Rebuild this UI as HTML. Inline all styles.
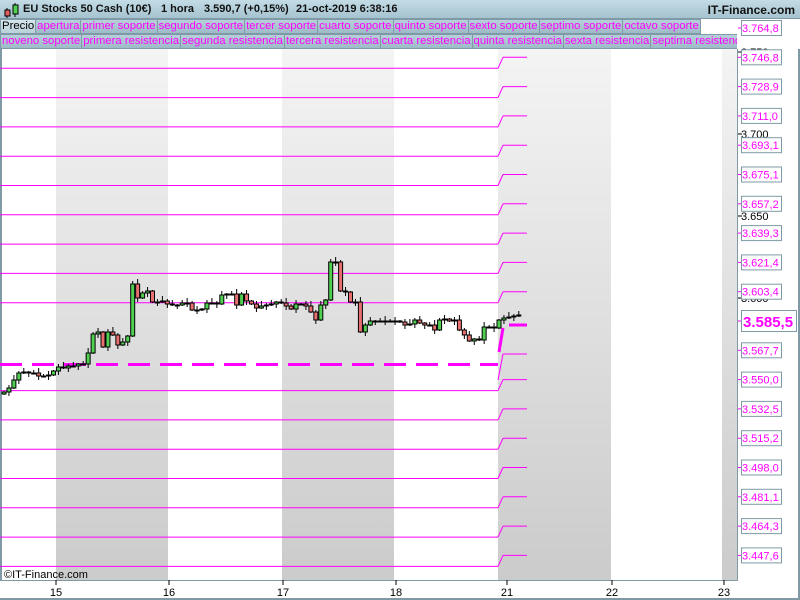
<!DOCTYPE html>
<html><head><meta charset="utf-8"><style>
*{margin:0;padding:0;box-sizing:border-box}
body{width:800px;height:600px;overflow:hidden;background:#fff;font-family:"Liberation Sans",sans-serif;position:relative}
#top{position:absolute;left:0;top:0;width:800px;height:19px;background:linear-gradient(#c3dce6,#a5c3cf);border-bottom:1px solid #7f9aa6;font-size:11px;font-weight:bold;color:#111}
#top span{position:absolute;top:3px}
.row{position:absolute;left:0;width:800px;height:15px;background:#fff;font-size:11.35px;white-space:nowrap;overflow:hidden}
.row span{display:inline-block;height:15px;line-height:13px;padding:0 1px;background:linear-gradient(#b7d0db,#9dbbc7);border:1px solid #7f9aa6;color:#f0f;margin-right:-1px}
</style></head><body>
<div id="top">
<svg width="20" height="19" style="position:absolute;left:2px;top:0"><line x1="5" y1="8" x2="5" y2="18" stroke="#000"/><rect x="3" y="10" width="5" height="6" fill="#e06060" stroke="#000"/><line x1="13" y1="3" x2="13" y2="17" stroke="#000"/><rect x="11" y="5" width="5" height="9" fill="#50d050" stroke="#000"/></svg>
<span style="left:23px">EU Stocks 50 Cash (10€)</span>
<span style="left:161px">1 hora</span>
<span style="left:204px">3.590,7 (+0,15%)</span>
<span style="left:296px">21-oct-2019 6:38:16</span>
<span style="right:5px;font-size:12px">IT-Finance.com</span>
</div>
<div class="row" style="top:19px"><span style="color:#000;background:linear-gradient(#d5e6ec,#b9d1da)">Precio</span><span>apertura</span><span>primer soporte</span><span>segundo soporte</span><span>tercer soporte</span><span>cuarto soporte</span><span>quinto soporte</span><span>sexto soporte</span><span>septimo soporte</span><span>octavo soporte</span></div>
<div class="row" style="top:34px;width:737px"><span>noveno soporte</span><span>primera resistencia</span><span>segunda resistencia</span><span>tercera resistencia</span><span>cuarta resistencia</span><span>quinta resistencia</span><span>sexta resistencia</span><span>septima resistencia</span></div>
<svg id="ch" width="800" height="600" style="position:absolute;left:0;top:0;z-index:-1" font-family="Liberation Sans" font-size="11">
<defs><linearGradient id="g" x1="0" y1="0" x2="0" y2="1"><stop offset="0" stop-color="#f4f4f4"/><stop offset="1" stop-color="#cbcbcb"/></linearGradient></defs>
<rect x="56" y="49" width="112" height="531" fill="url(#g)"/>
<rect x="282" y="49" width="112" height="531" fill="url(#g)"/>
<rect x="498" y="49" width="113" height="531" fill="url(#g)"/>
<rect x="722" y="49" width="15" height="531" fill="url(#g)"/>
<line x1="1" y1="49" x2="1" y2="580" stroke="#7f9aa6" stroke-width="2"/>
<line x1="737.5" y1="49" x2="737.5" y2="580" stroke="#7f9aa6"/>
<line x1="0" y1="580.5" x2="738" y2="580.5" stroke="#7f9aa6"/>
<rect x="0" y="598" width="800" height="2" fill="#7f9aa6"/>
<rect x="798" y="49" width="2" height="551" fill="#7f9aa6"/>
<g id="lv"></g><g id="cd"></g>
<text x="4" y="578" font-size="11">©IT-Finance.com</text>
</svg>
<svg width="800" height="600" style="position:absolute;left:0;top:0;z-index:2;pointer-events:none" font-family="Liberation Sans" font-size="11"><g id="ax"></g></svg>
<script>
var NS="http://www.w3.org/2000/svg";
function el(p,t,a,txt){var e=document.createElementNS(NS,t);for(var k in a)e.setAttribute(k,a[k]);if(txt)e.textContent=txt;document.getElementById(p).appendChild(e);return e;}
var vals=["3.764,8","3.746,8","3.728,9","3.711,0","3.693,1","3.675,1","3.657,2","3.639,3","3.621,4","3.603,4","3.585,5","3.567,7","3.550,0","3.532,5","3.515,2","3.498,0","3.481,1","3.464,3","3.447,6"];
[[52,"3.750"],[134,"3.700"],[216,"3.650"],[298,"3.600"]].forEach(function(a){el("ax","text",{x:741,y:a[0]+4},a[1]);el("ax","line",{x1:738,y1:a[0],x2:742,y2:a[0],stroke:"#000"});});
for(var k=0;k<19;k++){var yR=28+29.3*k,yL=39+29.3*k;
 if(k==10){el("lv","line",{x1:509,y1:325,x2:527,y2:325,stroke:"#f0f","stroke-width":3});el("lv","line",{x1:499,y1:352,x2:503,y2:328,stroke:"#f0f","stroke-width":3});}
 else if(k==11){el("lv","line",{x1:0,y1:364.5,x2:498,y2:364.5,stroke:"#f0f","stroke-width":3,"stroke-dasharray":"22,10"});el("lv","line",{x1:498,y1:380,x2:503,y2:354,stroke:"#f0f"});el("lv","line",{x1:503,y1:354,x2:527,y2:354,stroke:"#f0f"});}
 else{ if(yL>49&&yL<580){el("lv","line",{x1:0,y1:yL,x2:498,y2:yL,stroke:"#f0f"});}
  if(yR>49){el("lv","line",{x1:498,y1:yL,x2:503,y2:yR,stroke:"#f0f"});el("lv","line",{x1:503,y1:yR,x2:527,y2:yR,stroke:"#f0f"});}}
 if(k==10){el("ax","line",{x1:738,y1:yR,x2:742,y2:yR,stroke:"#f0f"});el("ax","rect",{x:741.5,y:yR-10.5,width:55,height:21,fill:"#fff",stroke:"#7f9aa6"});el("ax","text",{x:743,y:yR+6,fill:"#f0f","font-size":15,"font-weight":"bold"},vals[k]);}
 else{el("ax","line",{x1:738,y1:yR,x2:742,y2:yR,stroke:"#f0f"});el("ax","rect",{x:741.5,y:yR-7.5,width:40,height:15,fill:"#fff",stroke:"#7f9aa6"});el("ax","text",{x:742,y:yR+4,fill:"#f0f"},vals[k]);}
}
[[56,"15"],[169,"16"],[283,"17"],[396,"18"],[507,"21"],[612,"22"],[724,"23"]].forEach(function(a){el("ax","line",{x1:a[0],y1:580,x2:a[0],y2:585,stroke:"#000"});el("ax","text",{x:a[0],y:596,"text-anchor":"middle"},a[1]);});
var c=[392,388,380,373,372,373,373,376,376,375,371,367,368,366,366,364,364,353,334,332,347,332,335,345,342,336,284,298,293,291,302,302,301,304,305,305,303,303,310,310,309,303,303,304,295,294,294,305,294,301,304,308,306,305,304,302,303,306,309,304,304,306,312,320,305,300,262,262,291,292,302,302,332,325,321,321,321,321,321,321,322,325,324,320,323,325,325,330,320,319,321,320,330,335,341,339,340,327,327,328,320,318,317,316,315];
var o=394;for(var i=0;i<c.length;i++){var x=4+i*4.95;var cl=c[i];var t=Math.min(o,cl),b=Math.max(o,cl);var w1=(i*7)%5+1,w2=(i*3)%6+1;
 el("cd","line",{x1:x,y1:t-w1,x2:x,y2:b+w2,stroke:"#000"});
 el("cd","rect",{x:x-2,y:t,width:4,height:Math.max(b-t,1),fill:cl<o?"#50d050":"#e87070",stroke:"#000","stroke-width":1});o=cl;}
</script>
</body></html>
